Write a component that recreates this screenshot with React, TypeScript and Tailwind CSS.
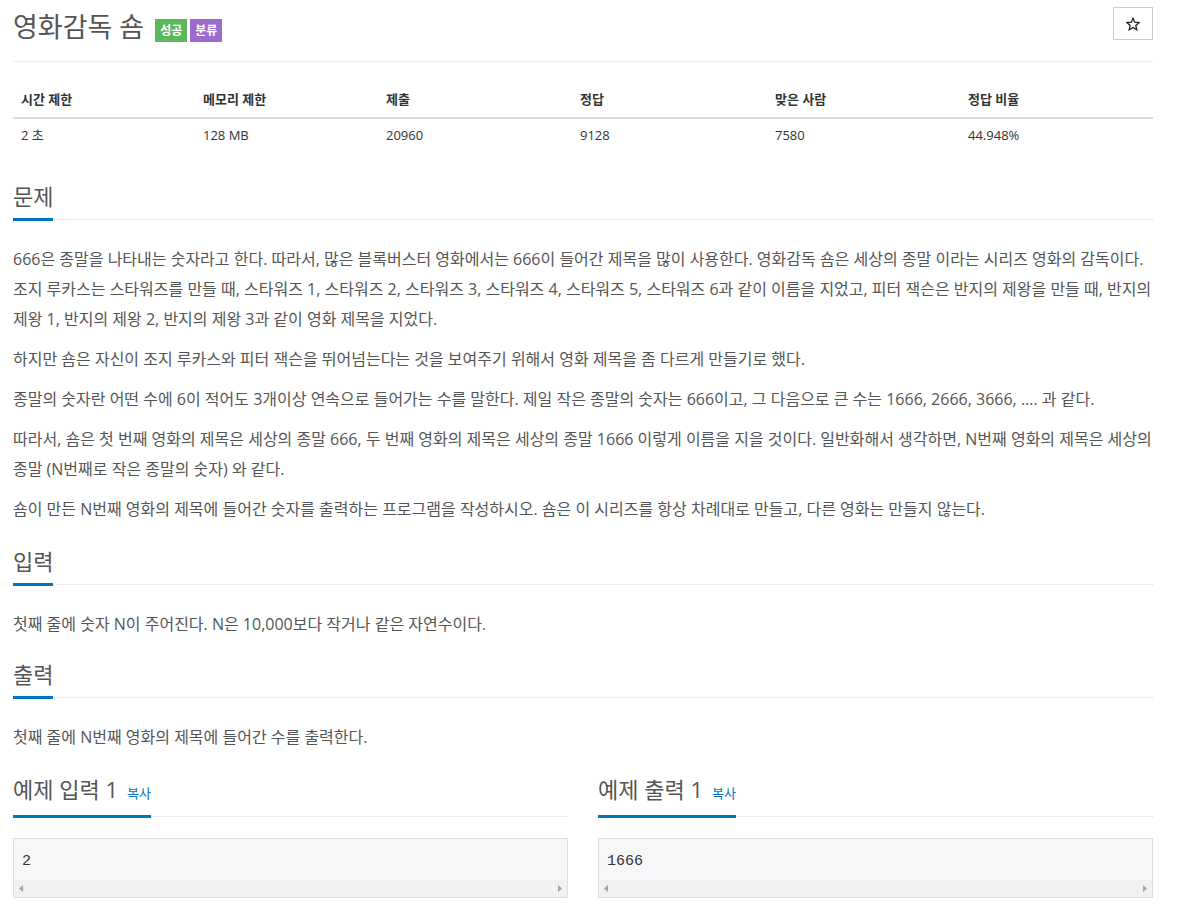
import React from "react";

const FONT = "font-['Open_Sans','Noto_Sans_CJK_KR',sans-serif]";

const stats = [
  { label: "시간 제한", value: "2 초", w: "w-[182px]" },
  { label: "메모리 제한", value: "128 MB", w: "w-[183px]" },
  { label: "제출", value: "20960", w: "w-[194px]" },
  { label: "정답", value: "9128", w: "w-[195px]" },
  { label: "맞은 사람", value: "7580", w: "w-[193px]" },
  { label: "정답 비율", value: "44.948%", w: "" },
];

function SectionHead({ title, copy }: { title: string; copy?: boolean }) {
  return (
    <div className="flex items-end">
      <span className="inline-flex items-baseline border-b-[3px] border-[#0076c0] pb-[7px] text-[22px] leading-[30px] text-[#555]">
        {title}
        {copy && <span className="ml-[9px] text-[13px] text-[#0076c0]">복사</span>}
      </span>
      <div className="mb-[1px] flex-1 border-b border-dotted border-[#ddd]" />
    </div>
  );
}

function SampleBox({ text }: { text: string }) {
  return (
    <div className="mt-[20px] border border-[#dcdce2] bg-[#f7f7f9]">
      <pre className="px-[8px] pt-[13px] pb-[8px] font-['Liberation_Mono',monospace] text-[15px] leading-[20px] text-[#333]">
        {text}
      </pre>
      <div className="flex h-[17px] items-center justify-between bg-[#f1f1f1] px-[5px]">
        <svg width="4" height="7" viewBox="0 0 4 7">
          <path d="M4 0 L0 3.5 L4 7 Z" fill="#a3a3a3" />
        </svg>
        <svg width="4" height="7" viewBox="0 0 4 7">
          <path d="M0 0 L4 3.5 L0 7 Z" fill="#a3a3a3" />
        </svg>
      </div>
    </div>
  );
}

export default function App() {
  return (
    <div className={`${FONT} min-h-[923px] bg-white`}>
      <div className="ml-[13px] w-[1140px]">
        {/* title */}
        <div className="flex items-start justify-between border-b border-[#eee] pt-[7px] pb-[16px]">
          <div className="mt-[1px] flex items-start">
            <h1 className="text-[27px] leading-[37px] text-[#555]">영화감독 숌</h1>
            <div className="ml-[11px] mt-[11px] flex gap-[3px]">
              <span className="flex h-[23px] items-center bg-[#5cb85c] px-[5px] text-[12px] font-bold text-white">성공</span>
              <span className="flex h-[23px] items-center bg-[#9c6bcb] px-[5px] text-[12px] font-bold text-white">분류</span>
            </div>
          </div>
          <button className="flex h-[33px] w-[40px] items-center justify-center border border-[#ccc] bg-white">
            <svg width="14" height="14" viewBox="0 0 24 24">
              <polygon
                points="12,2 14.9,8.9 22.5,9.6 16.8,14.6 18.5,22 12,18.1 5.5,22 7.2,14.6 1.5,9.6 9.1,8.9"
                fill="none"
                stroke="#222"
                strokeWidth="2.2"
                strokeLinejoin="miter"
              />
            </svg>
          </button>
        </div>

        {/* stats table */}
        <table className="mt-[19px] w-full border-collapse text-[13px] text-[#333]">
          <thead>
            <tr className="border-b-2 border-[#ddd]">
              {stats.map((s) => (
                <th key={s.label} className={`${s.w} px-[8px] py-[8px] text-left font-bold leading-[20px]`}>
                  {s.label}
                </th>
              ))}
            </tr>
          </thead>
          <tbody>
            <tr>
              {stats.map((s) => (
                <td key={s.label} className="px-[8px] py-[6px] leading-[20px]">
                  {s.value}
                </td>
              ))}
            </tr>
          </tbody>
        </table>

        {/* problem */}
        <section className="mt-[30px]">
          <SectionHead title="문제" />
          <div className="mt-[23px] text-[16px] leading-[30px] text-[#555]">
            <p className="mb-[10px]">
              666은 종말을 나타내는 숫자라고 한다. 따라서, 많은 블록버스터 영화에서는 666이 들어간 제목을 많이 사용한다. 영화감독 숌은 세상의 종말 이라는 시리즈 영화의 감독이다. 조지 루카스는 스타워즈를 만들 때, 스타워즈 1, 스타워즈 2, 스타워즈 3, 스타워즈 4, 스타워즈 5, 스타워즈 6과 같이 이름을 지었고, 피터 잭슨은 반지의 제왕을 만들 때, 반지의 제왕 1, 반지의 제왕 2, 반지의 제왕 3과 같이 영화 제목을 지었다.
            </p>
            <p className="mb-[10px]">
              하지만 숌은 자신이 조지 루카스와 피터 잭슨을 뛰어넘는다는 것을 보여주기 위해서 영화 제목을 좀 다르게 만들기로 했다.
            </p>
            <p className="mb-[10px]">
              종말의 숫자란 어떤 수에 6이 적어도 3개이상 연속으로 들어가는 수를 말한다. 제일 작은 종말의 숫자는 666이고, 그 다음으로 큰 수는 1666, 2666, 3666, .... 과 같다.
            </p>
            <p className="mb-[10px]">
              따라서, 숌은 첫 번째 영화의 제목은 세상의 종말 666, 두 번째 영화의 제목은 세상의 종말 1666 이렇게 이름을 지을 것이다. 일반화해서 생각하면, N번째 영화의 제목은 세상의 종말 (N번째로 작은 종말의 숫자) 와 같다.
            </p>
            <p className="mb-[10px]">
              숌이 만든 N번째 영화의 제목에 들어간 숫자를 출력하는 프로그램을 작성하시오. 숌은 이 시리즈를 항상 차례대로 만들고, 다른 영화는 만들지 않는다.
            </p>
          </div>
        </section>

        {/* input */}
        <section className="mt-[22px]">
          <SectionHead title="입력" />
          <div className="mt-[23px] text-[16px] leading-[30px] text-[#555]">
            <p className="mb-[10px]">첫째 줄에 숫자 N이 주어진다. N은 10,000보다 작거나 같은 자연수이다.</p>
          </div>
        </section>

        {/* output */}
        <section className="mt-[20px]">
          <SectionHead title="출력" />
          <div className="mt-[23px] text-[16px] leading-[30px] text-[#555]">
            <p className="mb-[10px]">첫째 줄에 N번째 영화의 제목에 들어간 수를 출력한다.</p>
          </div>
        </section>

        {/* samples */}
        <div className="mt-[22px] grid grid-cols-2 gap-x-[30px]">
          <section>
            <SectionHead title="예제 입력 1" copy />
            <SampleBox text="2" />
          </section>
          <section>
            <SectionHead title="예제 출력 1" copy />
            <SampleBox text="1666" />
          </section>
        </div>
      </div>
    </div>
  );
}
